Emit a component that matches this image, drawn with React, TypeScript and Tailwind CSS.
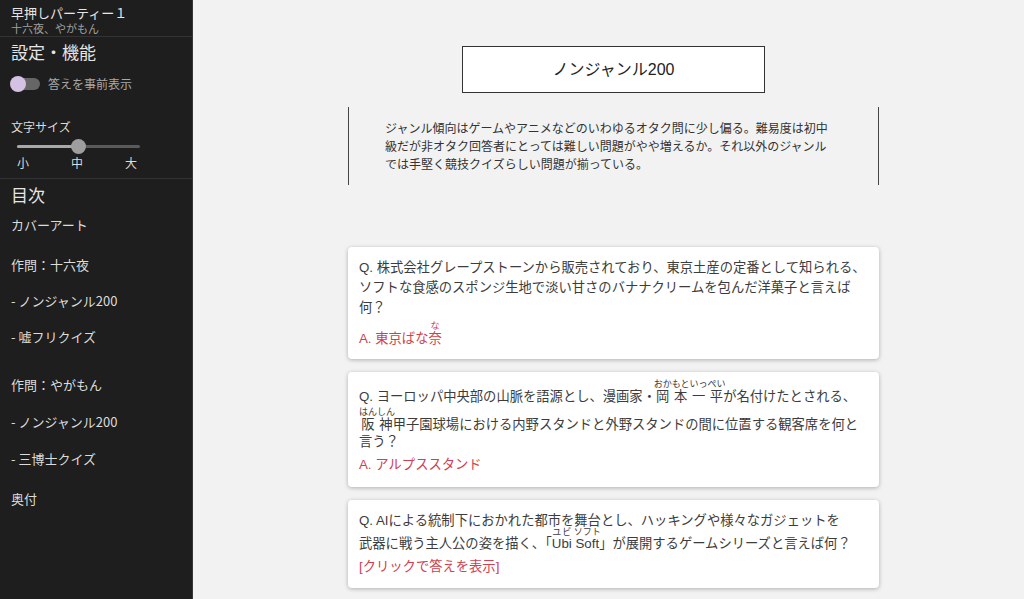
import React from "react";

const jp = { fontFamily: '"Noto Sans CJK JP", sans-serif' };
const body = { fontFamily: '"Liberation Sans", "Noto Sans CJK JP", sans-serif' };

function R({ b, t }: { b: string; t: string }) {
  return (
    <ruby>
      {b}
      <rt className="text-[9px] leading-[6px]">{t}</rt>
    </ruby>
  );
}

const toc = [
  { label: "カバーアート", cls: "h-[40px]" },
  { label: "作問：十六夜", cls: "h-[36px]" },
  { label: "- ノンジャンル200", cls: "h-[36px]" },
  { label: "- 嘘フリクイズ", cls: "h-[48px]" },
  { label: "作問：やがもん", cls: "h-[37px]" },
  { label: "- ノンジャンル200", cls: "h-[37px]" },
  { label: "- 三博士クイズ", cls: "h-[40px]" },
  { label: "奥付", cls: "h-[40px]" },
];

function Sidebar() {
  return (
    <aside className="w-[193px] shrink-0 h-[599px] bg-[#1e1e1e] border-r border-[#383838] text-[#dcdcdc] overflow-hidden" style={jp}>
      <div className="px-[11px] pt-[5px] h-[37px] border-b border-[#333]">
        <div className="text-[13px] leading-[16px] text-[#e6e6e6]">早押しパーティー１</div>
        <div className="text-[11px] leading-[13px] mt-[1px] text-[#a0a0a0]">十六夜、やがもん</div>
      </div>
      <div className="px-[11px] h-[142px] border-b border-[#333]">
        <div className="text-[17px] leading-[20px] pt-[5px] text-[#e6e6e6]">設定・機能</div>
        <div className="flex items-center mt-[14px] h-[16px]">
          <div className="relative w-[30px] h-[16px] ml-[-1px]">
            <div className="absolute left-[8px] top-[2px] w-[22px] h-[12px] rounded-full bg-[#666]" />
            <div className="absolute left-0 top-0 w-[16px] h-[16px] rounded-full bg-[#d4c1e4]" />
          </div>
          <span className="ml-[8px] text-[12px] text-[#a8a8a8]">答えを事前表示</span>
        </div>
        <div className="mt-[27px] text-[12px] leading-[16px] text-[#dcdcdc]">文字サイズ</div>
        <div className="relative ml-[6px] w-[123px] h-[14px] mt-[5px]">
          <div className="absolute left-0 right-0 top-[5px] h-[3px] rounded bg-[#5a5a5a]" />
          <div className="absolute left-0 w-[61px] top-[5px] h-[3px] rounded bg-[#a8a8a8]" />
          <div className="absolute left-[54px] top-[-1px] w-[15px] h-[15px] rounded-full bg-[#9e9e9e]" />
        </div>
        <div className="flex justify-between w-[120px] ml-[6px] text-[12px] leading-[14px] mt-[2px] text-[#dcdcdc]">
          <span>小</span>
          <span>中</span>
          <span>大</span>
        </div>
      </div>
      <div className="px-[11px]">
        <div className="text-[17px] leading-[20px] pt-[6px] pb-[10px] text-[#e6e6e6]">目次</div>
        {toc.map((t, i) => (
          <div key={i} className={"text-[13px] leading-[20px] " + t.cls}>
            {t.label}
          </div>
        ))}
      </div>
    </aside>
  );
}

function Card({ className, children }: { className: string; children: React.ReactNode }) {
  return (
    <div className={"bg-white rounded-[4px] shadow-[0_1px_4px_rgba(0,0,0,0.28)] px-[11px] text-[13.3px] leading-[20px] text-[#3c3c3c] " + className}>
      {children}
    </div>
  );
}

function Answer({ children }: { children: React.ReactNode }) {
  return <div className="mt-[3px] text-[#d0404f]">{children}</div>;
}

export default function App() {
  return (
    <div className="flex w-[1024px] h-[599px] overflow-hidden bg-[#f2f2f2]" style={body}>
      <Sidebar />
      <main className="flex-1 pl-[155px] pt-[46px]">
        <div className="w-[531px] flex flex-col">
          <div className="self-center w-[303px] h-[47px] border border-[#333] bg-white flex items-center justify-center text-[16px] text-[#222]">
            ノンジャンル200
          </div>
          <div className="mt-[14px] border-l border-r border-[#444] pl-[36px] pt-[12px] pb-[12px]">
            <p className="w-[448px] text-[12px] leading-[18px] text-[#333]" style={jp}>
              ジャンル傾向はゲームやアニメなどのいわゆるオタク問に少し偏る。難易度は初中級だが非オタク回答者にとっては難しい問題がやや増えるか。それ以外のジャンルでは手堅く競技クイズらしい問題が揃っている。
            </p>
          </div>
          <div className="mt-[62px] flex flex-col gap-[13px]">
            <Card className="pt-[11px] pb-[10px]">
              <div>Q. 株式会社グレープストーンから販売されており、東京土産の定番として知られる、</div>
              <div>ソフトな食感のスポンジ生地で淡い甘さのバナナクリームを包んだ洋菓子と言えば</div>
              <div>何？</div>
              <Answer>
                A. 東京ばな<R b="奈" t="な" />
              </Answer>
            </Card>
            <Card className="pt-[7px] pb-[12px]">
              <div>
                Q. ヨーロッパ中央部の山脈を語源とし、漫画家・<R b="岡本一平" t="おかもといっぺい" />が名付けたとされる、
              </div>
              <div>
                <R b="阪神" t="はんしん" />甲子園球場における内野スタンドと外野スタンドの間に位置する観客席を何と
              </div>
              <div className="-mt-[3px]">言う？</div>
              <Answer>A. アルプススタンド</Answer>
            </Card>
            <Card className="pt-[11px] pb-[11px]">
              <div>Q. AIによる統制下におかれた都市を舞台とし、ハッキングや様々なガジェットを</div>
              <div className="-mt-[4px]">
                武器に戦う主人公の姿を描く、「<R b="Ubi" t="ユビ" /> <R b="Soft" t="ソフト" />」が展開するゲームシリーズと言えば何？
              </div>
              <Answer>[クリックで答えを表示]</Answer>
            </Card>
          </div>
        </div>
      </main>
    </div>
  );
}
